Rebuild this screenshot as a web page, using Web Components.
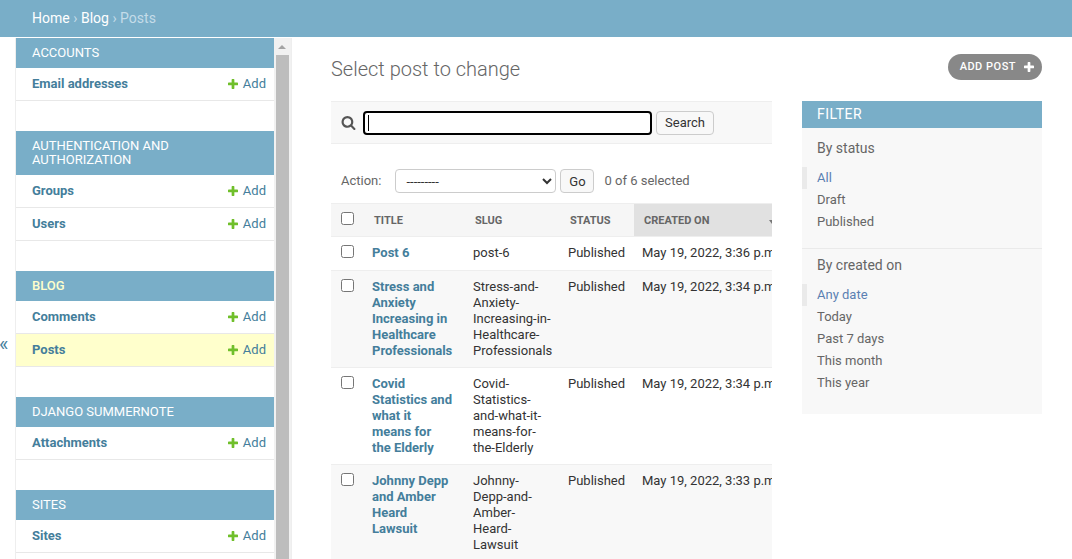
<!DOCTYPE html>
<html lang="en">
<head>
<meta charset="utf-8">
<title>Select post to change</title>
<style>
  html, body { margin: 0; height: 100%; overflow: hidden; background: #fff; }
  body { font-family: Roboto, "Liberation Sans", sans-serif; font-size: 13px; color: #333; }
</style>
</head>
<body>
<admin-page>
  <admin-breadcrumbs slot="top"></admin-breadcrumbs>
  <admin-sidebar slot="side">
    <side-module caption="Accounts">
      <side-row>Email addresses</side-row>
    </side-module>
    <side-module caption="Authentication and Authorization">
      <side-row>Groups</side-row>
      <side-row>Users</side-row>
    </side-module>
    <side-module caption="Blog" current>
      <side-row>Comments</side-row>
      <side-row current>Posts</side-row>
    </side-module>
    <side-module caption="Django Summernote">
      <side-row>Attachments</side-row>
    </side-module>
    <side-module caption="Sites">
      <side-row>Sites</side-row>
    </side-module>
  </admin-sidebar>
  <content-head>Select post to change</content-head>
  <div class="changelist" style="display:flex;gap:30px;align-items:flex-start">
    <change-results></change-results>
    <filter-panel>
      <filter-group title="By status" items="All|Draft|Published"></filter-group>
      <filter-group title="By created on" items="Any date|Today|Past 7 days|This month|This year"></filter-group>
    </filter-panel>
  </div>
</admin-page>

<script>
const PLUS = 'M1600 796v192q0 40-28 68t-68 28h-416v416q0 40-28 68t-68 28h-192q-40 0-68-28t-28-68v-416h-416q-40 0-68-28t-28-68v-192q0-40 28-68t68-28h416v-416q0-40 28-68t68-28h192q40 0 68 28t28 68v416h416q40 0 68 28t28 68z';
const SEARCH = 'M1216 832q0-185-131.500-316.500t-316.500-131.500-316.500 131.500-131.500 316.500 131.500 316.500 316.500 131.500 316.500-131.500 131.500-316.500zm512 832q0 52-38 90t-90 38q-54 0-90-38l-343-342q-179 124-399 124-143 0-273.500-55.500t-225-150-150-225-55.500-273.500 55.500-273.500 150-225 225-150 273.500-55.500 273.500 55.500 225 150 150 225 55.500 273.500q0 220-124 399l343 343q37 37 37 90z';

function shadow(el, html) {
  el.attachShadow({ mode: 'open' }).innerHTML = html;
}

class AdminPage extends HTMLElement {
  constructor() {
    super();
    shadow(this, `
      <style>
        :host { display: block; height: 559px; overflow: hidden; }
        .main { display: flex; margin-top: 1px; height: 521px; }
        .toggle {
          flex: none; width: 15px; border-right: 1px solid #eee;
          color: #447e9b; font-size: 20px; line-height: 20px; overflow: hidden;
        }
        .toggle span { display: block; margin: 296px 0 0 -1px; }
        .content { flex: 1; min-width: 0; padding: 0 30px 0 39px; }
      </style>
      <slot name="top"></slot>
      <div class="main">
        <div class="toggle"><span>«</span></div>
        <slot name="side"></slot>
        <div class="content"><slot></slot></div>
      </div>`);
  }
}

class AdminBreadcrumbs extends HTMLElement {
  constructor() {
    super();
    shadow(this, `
      <style>
        :host { display: flex; align-items: center; height: 37px; box-sizing: border-box; padding: 0 0 2px 32px; background: #79aec8; color: #c4dce8; font-size: 14px; }
        a { color: #fff; }
        i { font-style: normal; margin: 0 3.5px; }
      </style>
      <a>Home</a><i>›</i><a>Blog</a><i>›</i>Posts`);
  }
}

class AdminSidebar extends HTMLElement {
  constructor() {
    super();
    shadow(this, `
      <style>
        :host { display: flex; flex: none; border-right: 1px solid #eee; }
        .nav { width: 258px; display: flex; flex-direction: column; gap: 30px; }
        .bar { width: 17px; background: #f1f1f1; position: relative; }
        .thumb { position: absolute; left: 2px; right: 2px; top: 17px; bottom: 0; background: #bdbdbd; }
        .up { position: absolute; left: 4px; top: 7px; border: 4px solid transparent; border-top: 0; border-bottom: 4px solid #a3a3a3; }
      </style>
      <div class="nav"><slot></slot></div>
      <div class="bar"><div class="up"></div><div class="thumb"></div></div>`);
  }
}

class SideModule extends HTMLElement {
  constructor() {
    super();
    shadow(this, `
      <style>
        :host { display: block; }
        .cap {
          padding: 8px 16px; background: #79aec8; color: #fff;
          font-size: 13px; font-weight: 400; line-height: 14px; text-transform: uppercase;
        }
        :host([current]) .cap { color: #ffc; font-weight: 500; }
      </style>
      <div class="cap"></div>
      <slot></slot>`);
  }
  connectedCallback() {
    this.shadowRoot.querySelector('.cap').textContent = this.getAttribute('caption');
  }
}

class SideRow extends HTMLElement {
  constructor() {
    super();
    shadow(this, `
      <style>
        :host {
          display: flex; justify-content: space-between;
          padding: 8px 8px 8px 16px; line-height: 16px;
          border-bottom: 1px solid #e8e8e8; color: #447e9b; font-size: 13px;
        }
        :host([current]) { background: #ffc; }
        .name { font-weight: 700; }
        .add { display: flex; align-items: center; gap: 5px; }
        svg { width: 10px; height: 10px; fill: #70bf2b; }
      </style>
      <span class="name"><slot></slot></span>
      <span class="add"><svg viewBox="192 192 1408 1408"><path d="${PLUS}"/></svg>Add</span>`);
  }
}

class ContentHead extends HTMLElement {
  constructor() {
    super();
    shadow(this, `
      <style>
        :host { display: flex; justify-content: space-between; height: 63px; box-sizing: border-box; padding-top: 16px; }
        h1 { margin: 4px 0 0; font-size: 20px; line-height: 22px; font-weight: 300; color: #666; }
        .tool {
          display: flex; align-items: center; gap: 8px; height: 26px; box-sizing: border-box;
          padding: 0 8px 2px 12px; border-radius: 15px; background: #888; color: #fff;
          font-size: 11px; font-weight: 500; letter-spacing: .5px; text-transform: uppercase;
        }
        svg { width: 10px; height: 10px; fill: #fff; margin-top: 2px; }
      </style>
      <h1><slot></slot></h1>
      <div class="tool">Add post<svg viewBox="192 192 1408 1408"><path d="${PLUS}"/></svg></div>`);
  }
}

const ROWS = [
  ['Post 6', 'post-6', 'May 19, 2022, 3:36 p.m.'],
  ['Stress and Anxiety Increasing in Healthcare Professionals', 'Stress-and-Anxiety-Increasing-in-Healthcare-Professionals', 'May 19, 2022, 3:34 p.m.'],
  ['Covid Statistics and what it means for the Elderly', 'Covid-Statistics-and-what-it-means-for-the-Elderly', 'May 19, 2022, 3:34 p.m.'],
  ['Johnny Depp and Amber Heard Lawsuit', 'Johnny-Depp-and-Amber-Heard-Lawsuit', 'May 19, 2022, 3:33 p.m.'],
];

class ChangeResults extends HTMLElement {
  constructor() {
    super();
    const rows = ROWS.map(r => `
      <tr>
        <td class="check"><input type="checkbox"></td>
        <th class="title">${r[0]}</th>
        <td>${r[1]}</td>
        <td>Published</td>
        <td class="date">${r[2]}</td>
      </tr>`).join('');
    shadow(this, `
      <style>
        :host { display: block; flex: 1; min-width: 0; overflow: hidden; }
        .toolbar {
          display: flex; align-items: center; box-sizing: border-box; height: 43px;
          padding: 0 0 0 10px; background: #f8f8f8;
          border-top: 1px solid #eee; border-bottom: 1px solid #eee;
        }
        .glass { width: 15px; height: 15px; fill: #555; margin-right: 7px; }
        .box { position: relative; display: flex; }
        .box input {
          width: 289px; height: 24px; box-sizing: border-box; padding: 0 4px; margin: 0;
          border: 2px solid #000; border-radius: 4px; background: #fff; outline: none;
        }
        .caret { position: absolute; left: 5px; top: 4px; width: 1px; height: 16px; background: #000; }
        button {
          height: 24px; box-sizing: border-box; margin: 0; padding: 0 8px;
          border: 1px solid #ccc; border-radius: 4px; background: #f8f8f8;
          font: 13px Roboto, sans-serif; color: #333;
        }
        .toolbar button { margin-left: 4px; width: 58px; }
        .actions { display: flex; align-items: center; height: 24px; margin: 25px 0 10px; padding-left: 10px; color: #666; }
        .actions span { margin-bottom: 2px; }
        .actions button { width: 34px; padding: 0; }
        select {
          width: 161px; height: 24px; margin: 0 4px 0 14px; box-sizing: border-box; padding: 0 6px;
          border: 1px solid #ccc; border-radius: 4px; background: #fff;
          font: 13px Roboto, sans-serif; color: #333;
        }
        .count { margin-left: 10px; }
        table { border-collapse: collapse; table-layout: fixed; width: 480px; border-top: 1px solid #eee; }
        thead th {
          height: 32px; padding: 0 0 0 10px; text-align: left; background: #f6f6f6; color: #666;
          font-size: 11px; font-weight: 700; text-transform: uppercase; border-bottom: 1px solid #eee;
        }
        th.sorted { background: #e1e1e1; }
        .sort { display: flex; align-items: center; justify-content: space-between; }
        .sort svg { width: 6px; height: 4px; margin-right: 36px; margin-top: 3px; fill: #777; }
        td, tbody th { padding: 8px; line-height: 16px; vertical-align: top; border-bottom: 1px solid #eee; font-size: 13px; font-weight: 400; text-align: left; }
        tbody th { color: #447e9b; font-weight: 700; padding-right: 12px; }
        tbody tr:first-child td { padding-bottom: 9px; }
        tbody tr:nth-child(even) td, tbody tr:nth-child(even) th { background: #f8f8f8; }
        .date { white-space: nowrap; }
        input[type=checkbox] { display: block; margin: 0; }
        td.check { padding: 8px 0 0 10px; vertical-align: top; }
        thead th.check { height: 24px; padding: 8px 0 0 10px; vertical-align: top; }
      </style>
      <div class="toolbar">
        <svg class="glass" viewBox="0 0 1792 1792"><path d="${SEARCH}"/></svg>
        <div class="box"><input type="text" aria-label="Search"><span class="caret"></span></div>
        <button>Search</button>
      </div>
      <div class="actions">
        <span>Action:</span>
        <select><option>---------</option></select>
        <button>Go</button>
        <span class="count">0 of 6 selected</span>
      </div>
      <table>
        <colgroup><col style="width:33px"><col style="width:101px"><col style="width:95px"><col style="width:74px"><col style="width:177px"></colgroup>
        <thead><tr>
          <th class="check"><input type="checkbox"></th>
          <th>Title</th><th>Slug</th><th>Status</th>
          <th class="sorted"><div class="sort">Created on<svg viewBox="0 0 6 4"><path d="M0 0h6L3 4z"/></svg></div></th>
        </tr></thead>
        <tbody>${rows}</tbody>
      </table>`);
  }
}

class FilterPanel extends HTMLElement {
  constructor() {
    super();
    shadow(this, `
      <style>
        :host { display: block; flex: none; width: 240px; background: #f8f8f8; }
        h2 { margin: 0; padding: 0 15px; height: 27px; line-height: 26px; background: #79aec8; color: #fff; font-size: 14px; font-weight: 400; letter-spacing: .5px; text-transform: uppercase; }
      </style>
      <h2>Filter</h2>
      <slot></slot>`);
  }
}

class FilterGroup extends HTMLElement {
  connectedCallback() {
    const items = this.getAttribute('items').split('|')
      .map((t, i) => `<li class="${i === 0 ? 'on' : ''}">${t}</li>`).join('');
    shadow(this, `
      <style>
        :host { display: block; padding-bottom: 15px; border-bottom: 1px solid #eaeaea; color: #666; }
        :host(:last-child) { border-bottom: 0; padding-bottom: 20px; }
        :host(:last-child) h3 { padding-top: 6px; }
        h3 { margin: 0; padding: 10px 15px 0; font-size: 14px; line-height: 20px; font-weight: 400; color: #666; }
        ul { list-style: none; margin: 9px 0 0; padding: 0; }
        li { height: 22px; line-height: 22px; padding-left: 15px; font-size: 13px; }
        li.on { padding-left: 10px; border-left: 5px solid #eaeaea; color: #5b80b2; }
      </style>
      <h3>${this.getAttribute('title')}</h3>
      <ul>${items}</ul>`);
  }
}

customElements.define('admin-page', AdminPage);
customElements.define('admin-breadcrumbs', AdminBreadcrumbs);
customElements.define('admin-sidebar', AdminSidebar);
customElements.define('side-module', SideModule);
customElements.define('side-row', SideRow);
customElements.define('content-head', ContentHead);
customElements.define('change-results', ChangeResults);
customElements.define('filter-panel', FilterPanel);
customElements.define('filter-group', FilterGroup);
</script>
</body>
</html>
